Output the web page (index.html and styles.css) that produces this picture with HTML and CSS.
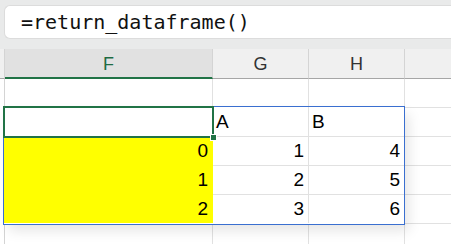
FILE: index.html
```html
<!DOCTYPE html>
<html lang="en">
<head>
    <meta charset="UTF-8">
    <meta name="viewport" content="width=device-width, initial-scale=1.0">
    <title>return_dataframe</title>
    <link rel="stylesheet" href="styles.css">
</head>
<body>
    <div class="formula_bar">
        <div class="formula_box">=return_dataframe()</div>
    </div>
    <div class="sheet">
        <!-- column headers -->
        <div class="row head">
            <span class="gutter"></span>
            <span class="cell col_f active">F</span>
            <span class="cell col_g">G</span>
            <span class="cell col_h">H</span>
            <span class="cell rest"></span>
        </div>
        <div class="row">
            <span class="gutter"></span>
            <span class="cell col_f"></span>
            <span class="cell col_g"></span>
            <span class="cell col_h"></span>
            <span class="cell rest"></span>
        </div>
        <div class="spill_wrap">
            <span class="gutter_col">
                <span class="gutter"></span><span class="gutter"></span>
                <span class="gutter"></span><span class="gutter"></span>
            </span>
            <div class="spill">
                <div class="row">
                    <span class="cell col_f selected"><i class="handle"></i></span>
                    <span class="cell col_g">A</span>
                    <span class="cell col_h">B</span>
                </div>
                <div class="row">
                    <span class="cell col_f idx num">0</span>
                    <span class="cell col_g num">1</span>
                    <span class="cell col_h num">4</span>
                </div>
                <div class="row">
                    <span class="cell col_f idx num">1</span>
                    <span class="cell col_g num">2</span>
                    <span class="cell col_h num">5</span>
                </div>
                <div class="row">
                    <span class="cell col_f idx num">2</span>
                    <span class="cell col_g num">3</span>
                    <span class="cell col_h num">6</span>
                </div>
            </div>
            <span class="rest_col">
                <span class="cell rest"></span><span class="cell rest"></span>
                <span class="cell rest"></span><span class="cell rest"></span>
            </span>
        </div>
        <div class="row">
            <span class="gutter"></span>
            <span class="cell col_f"></span>
            <span class="cell col_g"></span>
            <span class="cell col_h"></span>
            <span class="cell rest"></span>
        </div>
    </div>
</body>
</html>
```

FILE: styles.css
```css
* {margin:0; padding:0; box-sizing:border-box;}
body {background:#fff; overflow:hidden; font-family:"Liberation Sans", Arial, sans-serif;}

.formula_bar {
    background:#e9eaea; height:49px; padding:5px 0 0 4px;
}
.formula_box {
    background:#fff; height:34px; border:1px solid #dcdcdc; border-right:0;
    border-radius:6px 0 0 6px; padding-left:16px;
    font-family:"DejaVu Sans Mono", monospace; font-size:20px; line-height:33px; color:#111;
}

.sheet {}
.row {display:flex; height:29px;}
.cell {
    display:block; height:29px; border-right:1px solid #e1e1e1; border-bottom:1px solid #e1e1e1;
    font-size:19px; line-height:28px; color:#000; padding:0 3px; flex:none; white-space:nowrap;
}
.gutter {display:block; width:5px; height:29px; border-right:1px solid #d4d4d4; flex:none;}
.col_f {width:208px;}
.col_g, .col_h {width:96px;}
.rest {flex:1; border-right:0;}

/* column header row */
.row.head {height:30px; background:#f0f0f0;}
.row.head .gutter {height:30px; border-bottom:1px solid #a6a6a6; border-right-color:#d4d4d4;}
.row.head .cell {
    height:30px; text-align:center; font-size:18px; line-height:30px; color:#333;
    border-bottom:1px solid #a6a6a6; border-right-color:#d4d4d4;
}
.row.head .cell.active {background:#e1e1e1; color:#1f6b43; border-bottom:2px solid #217346;}
.row.head .cell.rest {border-right:0;}

/* spilled dataframe */
.spill_wrap {display:flex;}
.gutter_col, .rest_col {display:flex; flex-direction:column;}
.gutter_col .gutter {border-right:0;}
.rest_col {flex:1;}
.rest_col .cell {width:100%;}
.spill {
    position:relative; flex:none; margin-top:-1px;
    box-shadow:0 0 0 1px #3a6fd0, 5px 7px 12px rgba(0,0,0,0.10);
    margin-left:-1px; z-index:1; background:#fff;
}
.spill .row:first-child .cell {height:30px; line-height:30px;}
.spill .row:first-child {height:30px;}
.spill .col_f {width:209px;}
.spill .row:last-child .cell {border-bottom:0; height:28px;}
.spill .row:last-child {height:28px;}
.spill .col_h {border-right:0; width:95px;}
.num {text-align:right; padding-right:4px;}
.idx {background:#ffff00; border-color:#ffff00;}
.selected {position:relative; border:0;}
.selected::after {
    content:""; position:absolute; left:-1px; top:-1px; right:-1px; bottom:-1px;
    border:2px solid #217346;
}
.handle {
    position:absolute; right:-4px; bottom:-4px; width:7px; height:7px;
    background:#217346; border:1px solid #fff; z-index:2;
}
```
